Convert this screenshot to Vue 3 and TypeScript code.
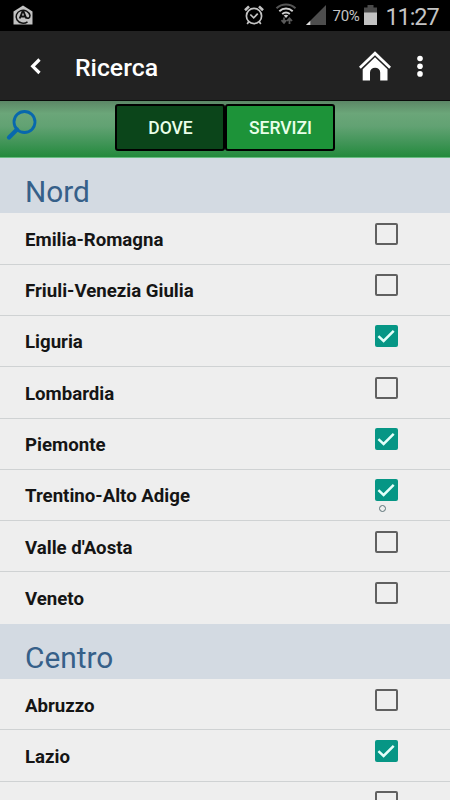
<script setup lang="ts">
import { ref } from 'vue'

interface Region {
  name: string
  checked: boolean
}
interface Area {
  title: string
  regions: Region[]
}

const activeTab = ref<'dove' | 'servizi'>('dove')

const areas = ref<Area[]>([
  {
    title: 'Nord',
    regions: [
      { name: 'Emilia-Romagna', checked: false },
      { name: 'Friuli-Venezia Giulia', checked: false },
      { name: 'Liguria', checked: true },
      { name: 'Lombardia', checked: false },
      { name: 'Piemonte', checked: true },
      { name: 'Trentino-Alto Adige', checked: true },
      { name: "Valle d'Aosta", checked: false },
      { name: 'Veneto', checked: false },
    ],
  },
  {
    title: 'Centro',
    regions: [
      { name: 'Abruzzo', checked: false },
      { name: 'Lazio', checked: true },
      { name: '', checked: false },
    ],
  },
])
</script>

<template>
  <div class="screen">
    <div class="status">
      <svg class="app-icon" width="20" height="20" viewBox="0 0 20 20">
        <path d="M0.5 6.500 10 0.500l9.500 6V19.500H0.500z" fill="#c2c2c2" />
        <path d="M14.500 16.800A7 6.500 0 1 1 17 10.500c0 3.200-3 3.600-3.700 1.500" fill="none" stroke="#111" stroke-width="1.500" />
        <path d="M6.700 13.500 9.300 7h1.400l2.600 6.500M8 11.500h4" fill="none" stroke="#111" stroke-width="1.900" />
      </svg>
      <svg class="alarm" width="20" height="20" viewBox="0 0 20 20" fill="none" stroke="#c4c4c4" stroke-width="1.700">
        <circle cx="10" cy="11" r="7.600" />
        <path d="M1 5.200 5 1.400M19 5.200 15 1.400" stroke-width="2.600" />
        <path d="M6.300 9.500 9.700 12.800l4-4.200M4.700 16.800 3.200 19M15.300 16.800l1.500 2.200" />
      </svg>
      <svg class="wifi" width="22" height="22" viewBox="0 0 22 22" fill="none">
        <path d="M1.500 5.200C7 .3 15 .3 20.500 5.200" stroke="#555" stroke-width="2.100" />
        <path d="M4.300 8.200c4-3.500 9.400-3.500 13.400 0M7.200 11.100c2.300-1.900 5.300-1.900 7.600 0" stroke="#d0d0d0" stroke-width="2" />
        <path d="m8.700 12.600 2.300 2.300 2.300-2.300c-1.300-1.200-3.300-1.200-4.600 0z" fill="#d0d0d0" />
        <path d="M9 14.500v5.300M6.500 17.200 9 19.900l2.200-2.700M14.500 21v-5.500M12 18l2.500-2.700L17 18" stroke="#5a5a5a" stroke-width="1.800" />
      </svg>
      <svg class="signal" width="20" height="20" viewBox="0 0 20 20">
        <path d="M20 0v20H0z" fill="#4d4d4d" />
        <path d="M4.300 15.700V20H0z" fill="#ddd" />
      </svg>
      <span class="percent">70%</span>
      <svg class="battery" width="13" height="21" viewBox="0 0 13 21">
        <path d="M3.500 0h6v2.500H13V8H0V2.500h3.500z" fill="#4a4a4a" />
        <path d="M0 7.500h13V20H0z" fill="#c2c2c2" />
      </svg>
      <span class="clock">11:27</span>
    </div>

    <header class="toolbar">
      <svg class="back" width="12" height="18" viewBox="0 0 12 18">
        <path d="M9.500 2.500 2.700 9.300l6.800 6.700" fill="none" stroke="#fff" stroke-width="3.200" />
      </svg>
      <h1 class="title">Ricerca</h1>
      <svg class="home" width="32" height="30" viewBox="0 0 32 30" fill="#fff">
        <path d="M16 .3 32 15.800l-1.800 2L16 4.300 1.800 17.800 0 15.800z" />
        <path d="M16 6.300 28.500 18.200V29.500H21.200V21.500a5.100 4.800 0 0 0-10.200 0V29.500H3.700V18.200z" />
      </svg>
      <svg class="more" width="6" height="22" viewBox="0 0 6 22" fill="#fff">
        <circle cx="3" cy="3.500" r="2.800" />
        <circle cx="3" cy="11.200" r="2.800" />
        <circle cx="3" cy="18.900" r="2.800" />
      </svg>
    </header>

    <nav class="tabs">
      <svg class="search" width="32" height="32" viewBox="0 0 32 32" fill="none" stroke="#0868ad">
        <circle cx="18.500" cy="13" r="10.500" stroke-width="2.800" />
        <path d="M11 20.500 3 28.500" stroke-width="4.200" stroke-linecap="round" />
      </svg>
      <button class="tab" :class="{ active: activeTab === 'dove' }" @click="activeTab = 'dove'">DOVE</button>
      <button class="tab" :class="{ active: activeTab === 'servizi' }" @click="activeTab = 'servizi'">SERVIZI</button>
    </nav>

    <main>
      <section v-for="area in areas" :key="area.title">
        <h2 class="area">{{ area.title }}</h2>
        <div v-for="region in area.regions" :key="region.name" class="row" @click="region.checked = !region.checked">
          <span class="name">{{ region.name }}</span>
          <span class="box" :class="{ checked: region.checked }">
            <svg v-if="region.checked" width="23" height="22" viewBox="0 0 23 22">
              <path d="M3.400 11.200 8.600 16 18.700 5.900" fill="none" stroke="#e4fffa" stroke-width="2.500" />
            </svg>
            <i v-if="region.name === 'Trentino-Alto Adige'" class="dot"></i>
          </span>
        </div>
      </section>
    </main>
  </div>
</template>

<style>
body {
  margin: 0;
  overflow: hidden;
}
</style>

<style scoped>
.screen {
  width: 450px;
  height: 800px;
  overflow: hidden;
  background: #eee;
  font-family: Roboto, 'Noto Sans', sans-serif;
}
.status {
  display: flex;
  align-items: flex-start;
  height: 31px;
  box-sizing: border-box;
  padding: 5px 0 0 12.500px;
  background: #000;
  color: #c4c4c4;
}
.app-icon {
  margin-right: auto;
}
.alarm {
  margin-right: 11px;
}
.wifi {
  margin: -2px 9px 0 0;
}
.signal {
  margin-right: 7px;
}
.percent {
  width: 31px;
  font-size: 15px;
  line-height: 22px;
  letter-spacing: -0.300px;
}
.clock {
  width: 73.500px;
  box-sizing: border-box;
  padding-left: 9px;
  font-size: 23.500px;
  line-height: 24px;
  letter-spacing: -1.100px;
}
.toolbar {
  display: flex;
  align-items: center;
  height: 70px;
  box-sizing: border-box;
  padding: 0 27px 0 30px;
  border-bottom: 1px solid #0a0a0a;
  background: #222;
}
.title {
  margin: 4px auto 0 33px;
  color: #fff;
  font-size: 24.800px;
  font-weight: 500;
  line-height: 30px;
}
.home {
  margin-right: 26px;
}
.tabs {
  display: flex;
  height: 57px;
  box-sizing: border-box;
  padding: 3px 0 0 6px;
  border-bottom: 1px solid #69bd82;
  background: linear-gradient(#5c8766 0%, #6ba679 22%, #62a273 45%, #3f9456 76%, #238a3c 100%);
}
.search {
  margin: 5px 77px 0 0;
}
.tab {
  width: 110px;
  height: 47px;
  padding: 1px 0 0 1px;
  border: 2px solid #000;
  border-radius: 3px;
  background: #1d9339;
  color: #e9ffe9;
  font-family: inherit;
  font-size: 17.500px;
  font-weight: 500;
}
.tab.active {
  background: #0b451a;
}
.area {
  height: 55.400px;
  margin: 0;
  box-sizing: border-box;
  padding: 16px 0 0 25px;
  background: #d3dae2;
  color: #366089;
  font-size: 29.800px;
  font-weight: 400;
  line-height: 36px;
}
.row {
  display: flex;
  justify-content: space-between;
  height: 51.300px;
  box-sizing: border-box;
  padding: 9.400px 52.500px 0 25px;
  border-bottom: 1px solid #cfd2d3;
}
.row:last-child {
  border-bottom: 0;
}
.name {
  color: #151515;
  font-size: 18.650px;
  font-weight: 700;
  line-height: 35px;
}
.box {
  position: relative;
  width: 23px;
  height: 22px;
  box-sizing: border-box;
  border: 2px solid #606060;
  border-radius: 2px;
}
.box.checked {
  border: 0;
  background: #069685;
}
.box svg {
  display: block;
}
.dot {
  position: absolute;
  left: 4.500px;
  top: 26px;
  width: 7px;
  height: 7px;
  box-sizing: border-box;
  border: 1px solid #5c7378;
  border-radius: 50%;
}
</style>
